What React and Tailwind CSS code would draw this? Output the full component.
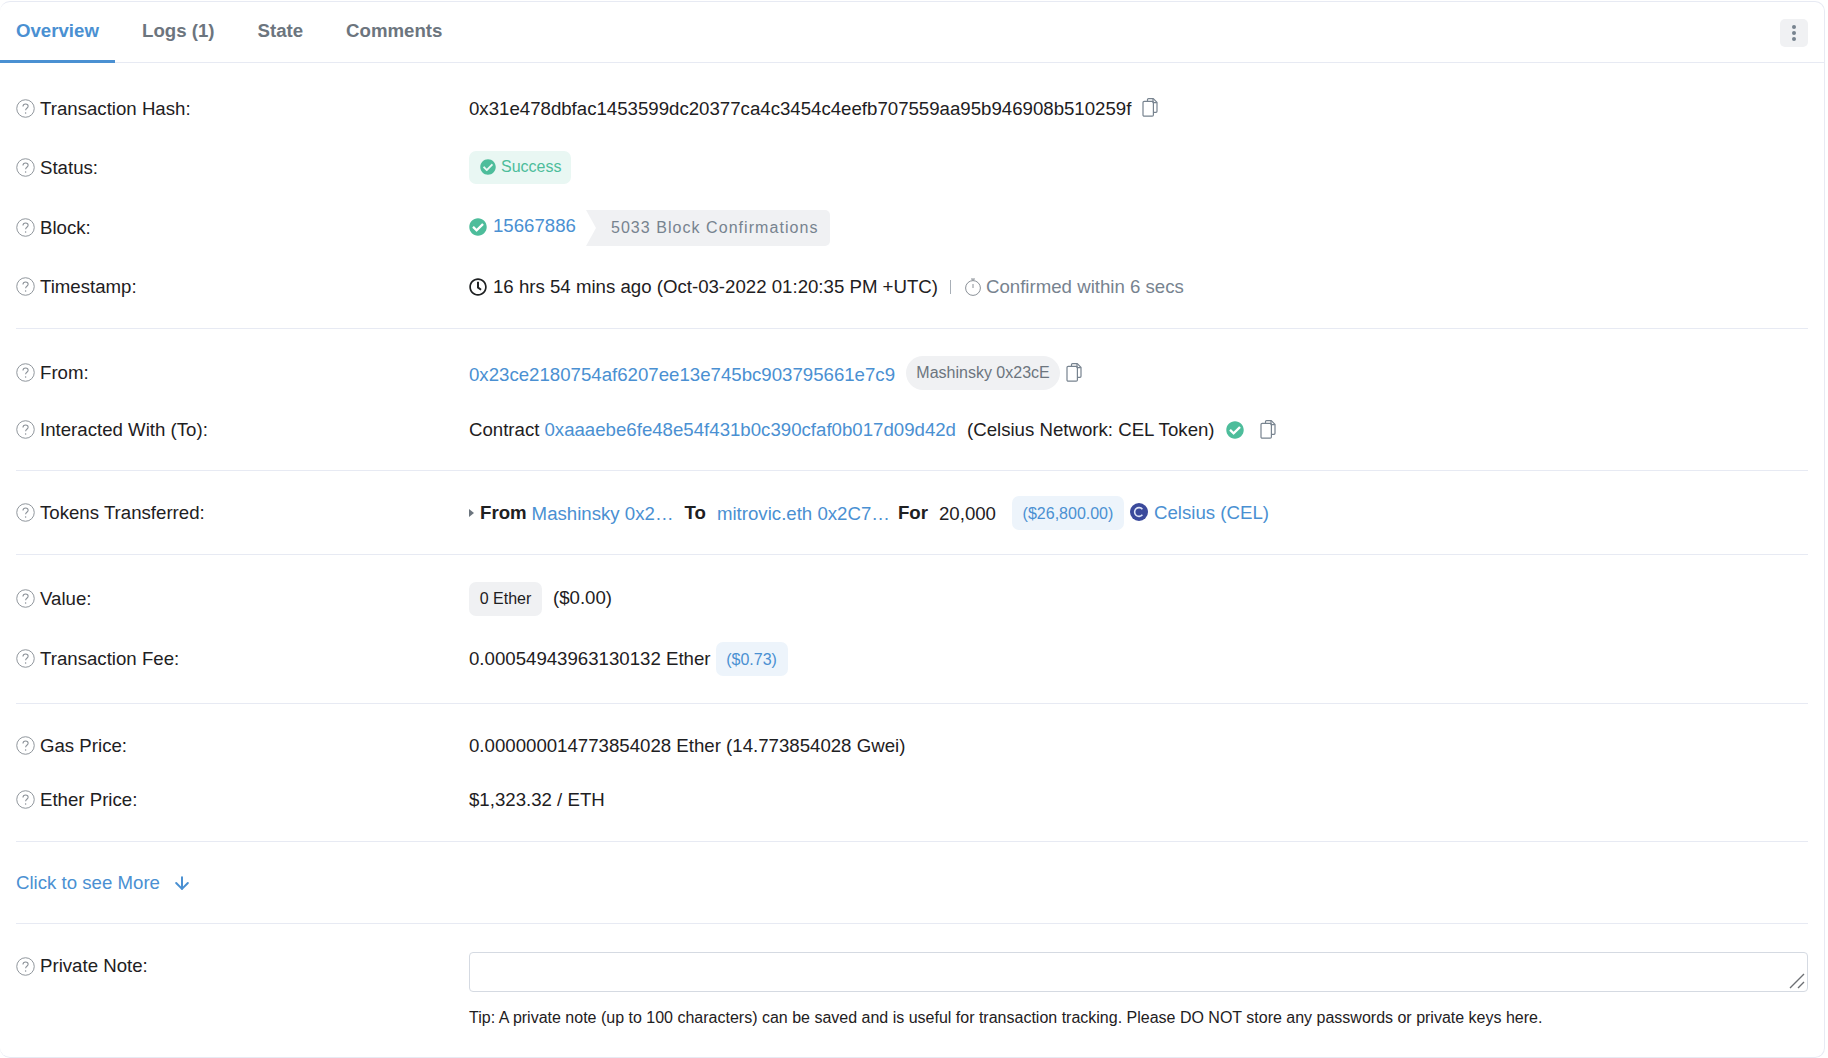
import { FaCheckCircle, FaRegClock } from "react-icons/fa";
import { ArrowDown } from "lucide-react";

// Icono de ayuda junto a cada etiqueta
function Help() {
  return (
    <svg viewBox="0 0 18 18" className="w-[19px] h-[19px] shrink-0 mr-[5px] text-[#8a9097]" fill="none" stroke="currentColor">
      <circle cx="9" cy="9" r="8.3" strokeWidth=".9" />
      <path d="M6.6 7.1c0-1.5 1.1-2.4 2.5-2.4s2.4.9 2.4 2.1c0 1.9-2.4 2-2.4 3.9" strokeWidth="1" />
      <circle cx="9.1" cy="13.2" r=".7" fill="currentColor" stroke="none" />
    </svg>
  );
}

function Copy({ className = "" }) {
  return (
    <svg viewBox="0 0 16 19" className={`w-[16px] h-[19px] shrink-0 text-[#77838f] ${className}`} fill="none" stroke="currentColor" strokeWidth="1.2" strokeLinejoin="round">
      <path d="M5.5 3V1.6c0-.5.4-1 1-1h4.8L15 4.3v9c0 .6-.4 1-1 1h-2.5" />
      <path d="M11 .8v3.8h3.8" />
      <rect x="1" y="3.4" width="10.4" height="14.8" rx="1.2" />
    </svg>
  );
}

function Row({ label, className = "", children }) {
  return (
    <div className={`flex items-center ${className}`}>
      <div className="w-[453px] flex items-center shrink-0">
        <Help />
        <span>{label}</span>
      </div>
      <div className="flex items-center min-w-0">{children}</div>
    </div>
  );
}

function Divider() {
  return <hr className="border-0 border-t border-[#e7eaf3]" />;
}

export default function App() {
  return (
    <div className="bg-white h-[1058px] pt-px pr-[3px] overflow-hidden font-['Liberation_Sans',Arial,sans-serif] text-[18.65px] text-[#1e2022]">
      <div className="h-[1057px] bg-white border border-l-0 border-[#e7eaf3] rounded-[10px]">
        {/* Pestañas */}
        <div className="flex items-center h-[61px] border-b border-[#e7eaf3] relative">
          <div className="flex items-center h-full font-bold text-[#6c757e] pb-[2px]">
            <span className="w-[115px] h-[61px] pl-4 pt-[15px] text-[#4a90d2] border-b-[3px] border-[#4a90d2] relative top-[1px]">Overview</span>
            <span className="ml-[27px]">Logs (1)</span>
            <span className="ml-[43px]">State</span>
            <span className="ml-[43px]">Comments</span>
          </div>
          <div className="absolute right-[16px] top-[17px] w-[28px] h-[28px] rounded-[5px] bg-[#f0f1f3] flex flex-col items-center justify-center gap-[2px]">
            <span className="w-[4px] h-[4px] rounded-full bg-[#77838f]" />
            <span className="w-[4px] h-[4px] rounded-full bg-[#77838f]" />
            <span className="w-[4px] h-[4px] rounded-full bg-[#77838f]" />
          </div>
        </div>

        <div className="pl-4 pr-[16px]">
          <div className="pt-[15px] pb-[11px]">
            <Row label="Transaction Hash:" className="h-[60px] pt-[2px]">
              <span>0x31e478dbfac1453599dc20377ca4c3454c4eefb707559aa95b946908b510259f</span>
              <Copy className="ml-[11px] relative top-[-1px]" />
            </Row>
            <Row label="Status:" className="h-[59px]">
              <span className="flex items-center h-[33px] w-[102px] pl-[11px] pb-[2px] rounded-[7px] bg-[#e9f7f3] text-[#4dbd9b] text-[16px]">
                <FaCheckCircle className="w-[16px] h-[16px] mr-[5px]" />
                Success
              </span>
            </Row>
            <Row label="Block:" className="h-[60px] pt-[2px]">
              <FaCheckCircle className="w-[18px] h-[18px] text-[#4dbd9b] mr-[6px] relative top-[-1px]" />
              <span className="text-[#4a90d2] relative top-[-2px]">15667886</span>
              <span className="relative ml-[10px] h-[36px] w-[244px] pl-[25px] flex items-center rounded-r-[5px] bg-[#f0f1f3] text-[#77838f] text-[16px] tracking-[1.05px]">
                <span className="absolute left-0 top-0 w-0 h-0 border-y-[18px] border-y-transparent border-l-[10px] border-l-white" />
                5033 Block Confirmations
              </span>
            </Row>
            <Row label="Timestamp:" className="h-[60px]">
              <FaRegClock className="w-[18px] h-[18px] mr-[6px]" />
              <span>16 hrs 54 mins ago (Oct-03-2022 01:20:35 PM +UTC)</span>
              <span className="ml-[12px] mr-[13px] w-px h-[14px] bg-[#a8afb7]" />
              <svg viewBox="0 0 18 18" className="w-[18px] h-[18px] mr-[4px] text-[#8a9097]" fill="none" stroke="currentColor" strokeWidth="1">
                <circle cx="9" cy="10" r="7.4" />
                <path d="M9 6v4M7 1h4M9 1v1.6" />
              </svg>
              <span className="text-[#77838f]">Confirmed within 6 secs</span>
            </Row>
          </div>
          <Divider />

          <div className="pt-[14px] pb-[13px]">
            <Row label="From:" className="h-[58px] pt-[1px]">
              <span className="text-[#4a90d2] relative top-[2px]">0x23ce2180754af6207ee13e745bc903795661e7c9</span>
              <span className="ml-[11px] h-[34px] w-[154px] flex items-center justify-center rounded-full bg-[#f0f1f3] text-[#6c757e] text-[16px]">Mashinsky 0x23cE</span>
              <Copy className="ml-[6px]" />
            </Row>
            <Row label="Interacted With (To):" className="h-[56px] pt-[2px]">
              <span>Contract</span>
              <span className="ml-[5px] text-[#4a90d2]">0xaaaebe6fe48e54f431b0c390cfaf0b017d09d42d</span>
              <span className="ml-[11px]">(Celsius Network: CEL Token)</span>
              <FaCheckCircle className="w-[18px] h-[18px] text-[#4dbd9b] ml-[11px]" />
              <Copy className="ml-[16px]" />
            </Row>
          </div>
          <Divider />

          <Row label="Tokens Transferred:" className="h-[83px]">
            <span className="w-0 h-0 border-y-[4px] border-y-transparent border-l-[5px] border-l-[#6c757e] mr-[6px]" />
            <b className="font-bold">From</b>
            <span className="ml-[5px] text-[#4a90d2] relative top-[1px]">Mashinsky 0x2…</span>
            <b className="ml-[11px] font-bold">To</b>
            <span className="ml-[11px] text-[#4a90d2] relative top-[1px]">mitrovic.eth 0x2C7…</span>
            <b className="ml-[8px] font-bold">For</b>
            <span className="ml-[11px] relative top-[1px]">20,000</span>
            <span className="ml-[16px] h-[34px] w-[112px] pt-[2px] flex items-center justify-center rounded-[7px] bg-[#edf4fb] text-[#4a90d2] text-[16px]">($26,800.00)</span>
            <svg viewBox="0 0 18 18" className="w-[18px] h-[18px] ml-[6px] mr-[6px] relative top-[-1px]">
              <circle cx="9" cy="9" r="9" fill="#3b4a9c" />
              <path d="M12.4 6.2a4.4 4.4 0 1 0 0 5.6" fill="none" stroke="#dfe6f7" strokeWidth="1.6" />
            </svg>
            <span className="text-[#4a90d2]">Celsius (CEL)</span>
          </Row>
          <Divider />

          <div className="pt-[14px] pb-[14px]">
            <Row label="Value:" className="h-[60px]">
              <span className="h-[34px] w-[73px] flex items-center justify-center rounded-[7px] bg-[#f0f1f3] text-[16px]">0 Ether</span>
              <span className="ml-[11px] relative top-[-1px]">($0.00)</span>
            </Row>
            <Row label="Transaction Fee:" className="h-[60px]">
              <span>0.00054943963130132 Ether</span>
              <span className="ml-[5px] h-[34px] w-[72px] pt-[1px] flex items-center justify-center rounded-[7px] bg-[#edf4fb] text-[#4a90d2] text-[16px]">($0.73)</span>
            </Row>
          </div>
          <Divider />

          <div className="pt-[14px] pb-[15px]">
            <Row label="Gas Price:" className="h-[54px] pt-[1px]">
              <span>0.000000014773854028 Ether (14.773854028 Gwei)</span>
            </Row>
            <Row label="Ether Price:" className="h-[54px] pt-[1px]">
              <span>$1,323.32 / ETH</span>
            </Row>
          </div>
          <Divider />

          <div className="h-[81px] flex items-center text-[#4a90d2]">
            <span>Click to see More</span>
            <ArrowDown className="ml-[12px] w-[20px] h-[20px]" strokeWidth={2.4} />
          </div>
          <Divider />

          <div className="flex pt-[28px]">
            <div className="w-[453px] flex items-center shrink-0 h-[28px]">
              <Help />
              <span>Private Note:</span>
            </div>
            <div className="flex-1">
              <div className="relative">
                <textarea className="block w-full h-[40px] border border-[#d5dae2] rounded-[4px] bg-white resize-none outline-none" />
                <svg viewBox="0 0 16 16" className="absolute right-[3px] bottom-[3px] w-[16px] h-[16px] text-[#6c6f73]" stroke="currentColor" strokeWidth="1.4">
                  <path d="M1 15 15 1M9 15l6-6" />
                </svg>
              </div>
              <p className="mt-[15px] text-[16px] leading-[22px]">Tip: A private note (up to 100 characters) can be saved and is useful for transaction tracking. Please DO NOT store any passwords or private keys here.</p>
            </div>
          </div>
        </div>
      </div>
    </div>
  );
}
